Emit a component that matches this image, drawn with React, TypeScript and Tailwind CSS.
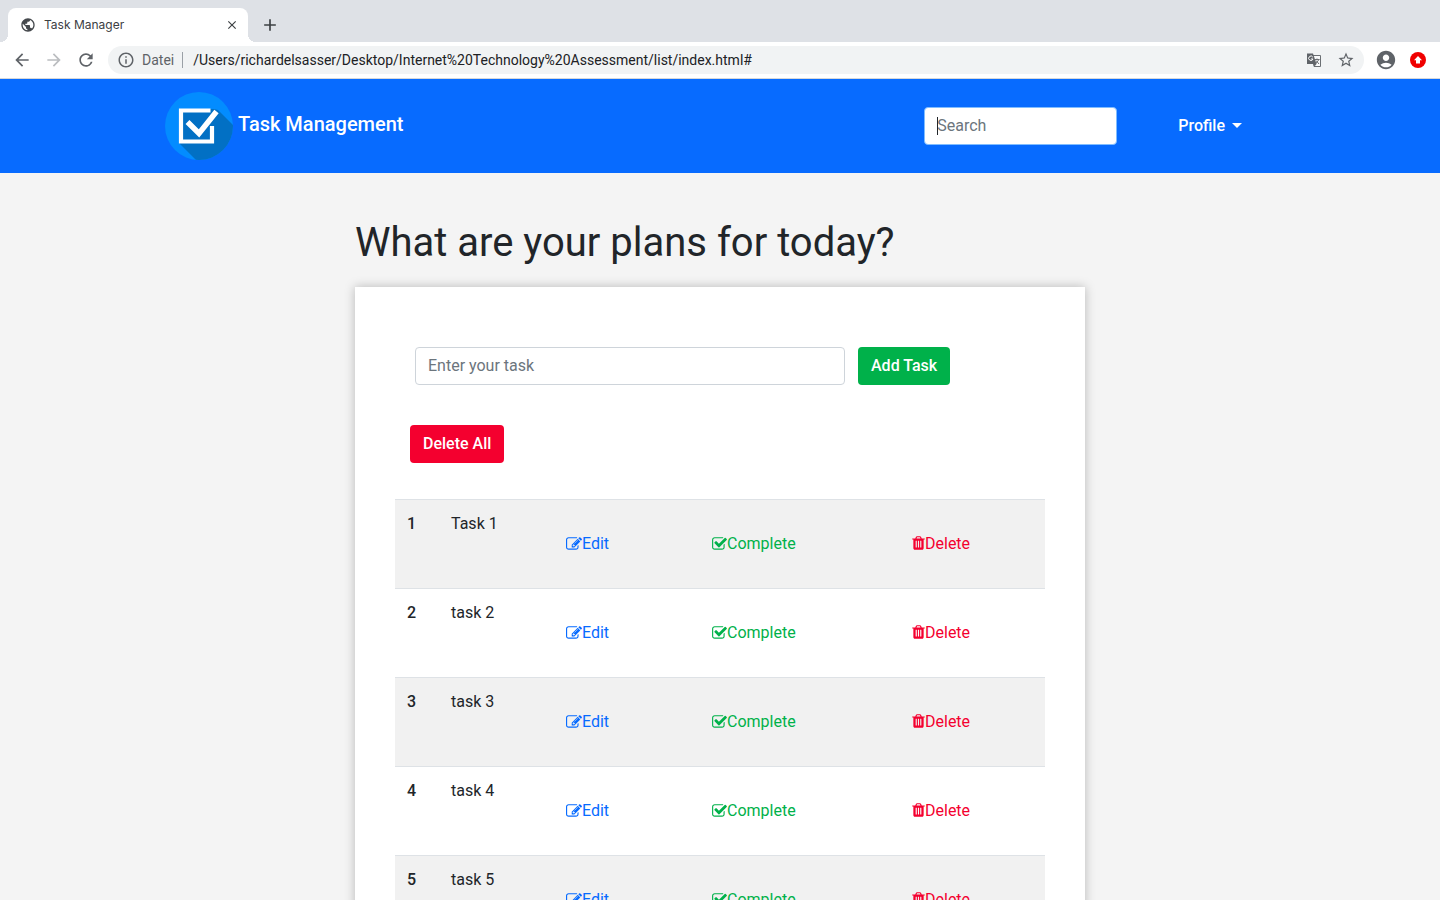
import React from 'react';
import { MdArrowBack, MdArrowForward, MdRefresh, MdInfoOutline, MdStarBorder, MdAccountCircle, MdAdd, MdClose, MdPublic } from 'react-icons/md';

const EDIT_PATH =
  'M888 1184l116-116-152-152-116 116v56h96v96h56zm440-720q-16-16-33 1l-350 350q-17 17-1 33t33-1l350-350q17-17 1-33zm80 594v190q0 119-84.500 203.500t-203.500 84.500h-832q-119 0-203.500-84.500t-84.500-203.500v-832q0-119 84.500-203.500t203.500-84.500h832q63 0 117 25 15 7 18 23 3 17-9 29l-49 49q-14 14-32 8-23-6-45-6h-832q-66 0-113 47t-47 113v832q0 66 47 113t113 47h832q66 0 113-47t47-113v-126q0-13 9-22l64-64q15-15 35-7t20 29zm-96-738l288 288-672 672h-288v-288zm444 132l-92 92-288-288 92-92q28-28 68-28t68 28l152 152q28 28 28 68t-28 68z';
const CHECK_PATH =
  'M1472 930v318q0 119-84.500 203.500t-203.500 84.500h-832q-119 0-203.500-84.500t-84.500-203.500v-832q0-119 84.500-203.500t203.500-84.500h832q63 0 117 25 15 7 18 23 3 17-9 29l-49 49q-10 10-23 10-3 0-9-2-23-6-45-6h-832q-66 0-113 47t-47 113v832q0 66 47 113t113 47h832q66 0 113-47t47-113v-254q0-13 9-22l64-64q10-10 23-10 6 0 12 3 20 8 20 29zm231-489l-814 814q-24 24-57 24t-57-24l-430-430q-24-24-24-57t24-57l110-110q24-24 57-24t57 24l263 263 647-647q24-24 57-24t57 24l110 110q24 24 24 57t-24 57z';
const TRASH_PATH =
  'M704 1376v-704q0-14-9-23t-23-9h-64q-14 0-23 9t-9 23v704q0 14 9 23t23 9h64q14 0 23-9t9-23zm256 0v-704q0-14-9-23t-23-9h-64q-14 0-23 9t-9 23v704q0 14 9 23t23 9h64q14 0 23-9t9-23zm256 0v-704q0-14-9-23t-23-9h-64q-14 0-23 9t-9 23v704q0 14 9 23t23 9h64q14 0 23-9t9-23zm-544-992h448l-48-117q-7-9-17-11h-317q-10 2-17 11zm928 32v64q0 14-9 23t-23 9h-96v948q0 83-47 143.500t-113 60.500h-832q-66 0-113-58.500t-47-141.500v-952h-96q-14 0-23-9t-9-23v-64q0-14 9-23t23-9h309l70-167q15-37 54-63t79-26h320q40 0 79 26t54 63l70 167h309q14 0 23 9t9 23z';

const tasks = ['Task 1', 'task 2', 'task 3', 'task 4', 'task 5'];

function Logo() {
  return (
    <svg viewBox="0 0 68 68" className="size-[68px]" aria-hidden="true">
      <defs>
        <clipPath id="disc">
          <circle cx="34" cy="34" r="34" />
        </clipPath>
      </defs>
      <g clipPath="url(#disc)">
        <rect width="68" height="68" fill="#038cff" />
        <path d="M14 17H49L53 18L90 55V90H53L14 51Z" fill="#0270c4" />
      </g>
      <path d="M45.500 18.500H16V49.500H47V34" fill="none" stroke="#fff" strokeWidth="4.200" />
      <path d="M22.500 30L34 41.500L51.500 19.500" fill="none" stroke="#fff" strokeWidth="5.500" />
    </svg>
  );
}

function Browser() {
  return (
    <header className="shrink-0 text-[#5f6368]">
      <div className="flex h-[42px] items-end bg-[#dee1e6] pl-2">
        <div className="relative flex h-[34px] w-60 items-center rounded-t-lg bg-white pl-3 pr-2 font-['Inter',sans-serif] text-xs text-[#3c4043]">
          <span className="absolute -left-2 bottom-0 size-2 bg-[radial-gradient(circle_at_0_0,transparent_8px,white_8px)]" />
          <span className="absolute -right-2 bottom-0 size-2 bg-[radial-gradient(circle_at_100%_0,transparent_8px,white_8px)]" />
          <MdPublic className="mr-2 size-4 text-[#45494d]" />
          <span className="flex-1">Task Manager</span>
          <button aria-label="Close tab" className="flex size-4 items-center justify-center">
            <MdClose className="size-3.5" />
          </button>
        </div>
        <button aria-label="New tab" className="ml-3 flex h-[34px] items-center text-[#3c4043]">
          <MdAdd className="size-5" />
        </button>
      </div>
      <div className="box-content flex h-9 items-center border-b border-[#d5d7da] bg-white pl-3 pr-3.5">
        <button aria-label="Back" className="mr-3">
          <MdArrowBack className="size-5" />
        </button>
        <button aria-label="Forward" className="mr-3 text-[#bbbdc0]">
          <MdArrowForward className="size-5" />
        </button>
        <button aria-label="Reload" className="mr-3">
          <MdRefresh className="size-5" />
        </button>
        <div className="flex h-7 flex-1 items-center rounded-full bg-[#f1f3f4] px-[9px] text-sm">
          <MdInfoOutline className="size-[18px]" />
          <span className="ml-[7px]">Datei</span>
          <span className="ml-2 h-4 w-px bg-[#9aa0a6]" />
          <span className="ml-2.5 flex-1 text-[#202124]">
            /Users/richardelsasser/Desktop/Internet%20Technology%20Assessment/list/index.html#
          </span>
          <svg viewBox="0 0 16 16" className="mr-[15px] size-4" aria-hidden="true">
            <path d="M6 3.500H14.500V14.500H8L6 3.500Z" fill="#f8f9fa" stroke="#6b6f73" />
            <path d="M1 1.500H7L10.500 12H1Z" fill="#5f6368" />
            <path d="M6.800 5.100A2.200 2.200 0 1 0 7 7H5" fill="none" stroke="#fff" />
            <path d="M9 7.500H13.500M11 6.500V7.500M13 7.500L9.500 12M10 8.500L13 12" fill="none" stroke="#6b6f73" />
            <path d="M7.500 12H10.500L8.500 14.500Z" fill="#5f6368" />
          </svg>
          <button aria-label="Bookmark">
            <MdStarBorder className="size-[18px]" />
          </button>
        </div>
        <button aria-label="Account" className="ml-[11px]">
          <MdAccountCircle className="size-[22px]" />
        </button>
        <button aria-label="Update" className="ml-[13px]">
          <svg viewBox="0 0 16 16" className="size-4">
            <circle cx="8" cy="8" r="8" fill="#f00000" />
            <path d="M8 4L12 8.200H10V11.500H6V8.200H4Z" fill="#fff" />
          </svg>
        </button>
      </div>
    </header>
  );
}

function Action({ label, path, box, icon, color }: { label: string; path: string; box: string; icon: string; color: string }) {
  return (
    <td className="p-3 align-top">
      <a href="#" className={'flex items-center py-5 leading-6 ' + color}>
        <svg viewBox={box} className={icon} fill="currentColor" aria-hidden="true">
          <path d={path} />
        </svg>
        {label}
      </a>
    </td>
  );
}

export default function App() {
  return (
    <div className="flex h-screen flex-col overflow-hidden bg-[#f4f4f4] font-['Roboto',sans-serif] text-base text-[#212529]">
      <Browser />
      <div className="flex-1 overflow-y-auto [scrollbar-width:none]">
        <nav className="bg-[#076bff] text-white">
          <div className="mx-auto flex h-[94px] max-w-[1110px] items-center">
            <a href="#" className="flex items-center gap-[5px] text-xl font-medium">
              <Logo />
              <span className="pb-1">Task Management</span>
            </a>
            <div className="relative ml-auto">
              <input
                aria-label="Search"
                placeholder="Search"
                className="block h-[38px] w-[193px] rounded border border-[#80bdff] bg-white px-3 pb-0.5 text-[#212529] outline-none placeholder:text-[#6c757d]"
              />
              <span className="absolute left-[13px] top-2.5 h-[18px] w-px bg-[#212529]" />
            </div>
            <button className="ml-[61px] mr-[33px] flex items-center gap-[7px] font-medium">
              Profile
              <svg viewBox="0 0 10 5" className="mb-0.5 h-[5px] w-2.5" fill="currentColor">
                <path d="M0 0H10L5 5Z" />
              </svg>
            </button>
          </div>
        </nav>
        <main className="mx-auto max-w-[730px]">
          <h1 className="pb-5 pt-[46px] text-[40px] leading-[48px]">What are your plans for today?</h1>
          <section className="bg-white px-10 pb-10 pt-[60px] shadow-[0_0_10px_rgba(0,0,0,0.25)]">
            <form className="flex gap-[13px] pl-5" onSubmit={(e) => e.preventDefault()}>
              <input
                aria-label="Enter your task"
                placeholder="Enter your task"
                className="h-[38px] w-[430px] rounded border border-[#ced4da] px-3 pb-0.5 outline-none placeholder:text-[#6c757d]"
              />
              <button className="h-[38px] rounded bg-[#00b14a] px-[13px] font-medium text-white">Add Task</button>
            </form>
            <button className="ml-[15px] mt-10 block h-[38px] rounded bg-[#f4002f] px-[13px] font-medium text-white">
              Delete All
            </button>
            <table className="mt-9 w-full table-fixed border-collapse">
              <colgroup>
                <col className="w-11" />
                <col className="w-[115px]" />
                <col className="w-[146px]" />
                <col className="w-[200px]" />
                <col />
              </colgroup>
              <tbody>
                {tasks.map((task, i) => (
                  <tr key={task} className="border-t border-[#dee2e6] odd:bg-[#f1f1f1]">
                    <th scope="row" className="p-3 text-left align-top font-medium">
                      {i + 1}
                    </th>
                    <td className="p-3 align-top">{task}</td>
                    <Action label="Edit" path={EDIT_PATH} box="0 0 1792 1792" icon="h-4 w-4" color="text-[#076bff]" />
                    <Action label="Complete" path={CHECK_PATH} box="64 0 1664 1792" icon="h-4 w-[15px]" color="text-[#00b14a]" />
                    <Action label="Delete" path={TRASH_PATH} box="192 0 1408 1792" icon="mb-0.5 h-4 w-[13px]" color="text-[#f4002f]" />
                  </tr>
                ))}
              </tbody>
            </table>
          </section>
        </main>
      </div>
    </div>
  );
}
